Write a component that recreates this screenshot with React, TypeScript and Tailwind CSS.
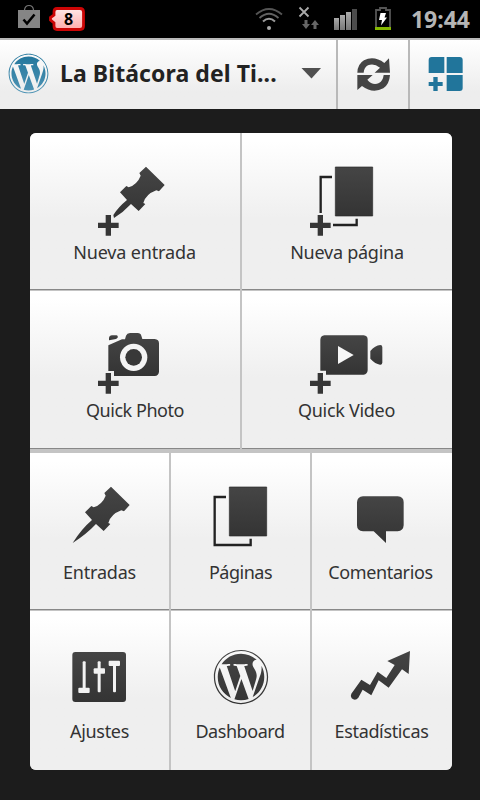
import React from "react";
import { FaWordpress } from "react-icons/fa";

type IconProps = { dx: number; dy: number };

// Icons are drawn on a triple-density grid and scaled down to device pixels.
function Glyph({ dx, dy, children }: IconProps & { children: React.ReactNode }) {
  return (
    <svg className="block h-20 w-full fill-[url(#ink)]" aria-hidden="true">
      <g transform={`translate(${dx} ${dy}) scale(0.33333)`}>{children}</g>
    </svg>
  );
}

function Plus({ x, y }: { x: number; y: number }) {
  return (
    <path
      transform={`translate(${x} ${y})`}
      d="M23 0H39V23H62V39H39V62H23V39H0V23H23Z"
      fill="#363636"
    />
  );
}

const PIN_HEAD =
  "M273 125L329 180L312 199L304 196Q272 208 265 234L271 237L251 258L228 237";

function PinAdd() {
  return (
    <Glyph dx={-10} dy={-32}>
      <path transform="translate(105 0)" d={PIN_HEAD + "Q205 262 177 279L175 270Q190 246 216 225L195 202L214 183L221 187Q247 178 257 152L253 144Z"} />
      <Plus x={234} y={270} />
    </Glyph>
  );
}

function Pin() {
  return (
    <Glyph dx={-10} dy={-32}>
      <path d={PIN_HEAD + "Q200 267 158 294Q184 252 216 225L195 202L214 183L221 187Q247 178 257 152L253 144Z"} />
    </Glyph>
  );
}

function PageSheet() {
  return <path d="M286 126H398V273H286Z" stroke="#2b2b2b" strokeWidth="2" />;
}

function PageAdd() {
  return (
    <Glyph dx={-2} dy={-32}>
      <PageSheet />
      <path d="M276 156H242V264M279 300H350V281" fill="none" stroke="#222" strokeWidth="7" />
      <Plus x={210} y={270} />
    </Glyph>
  );
}

function Pages() {
  return (
    <Glyph dx={-37} dy={-32}>
      <PageSheet />
      <path d="M276 156H242V300H350V281" fill="none" stroke="#222" strokeWidth="7" />
    </Glyph>
  );
}

function CameraAdd() {
  return (
    <Glyph dx={-10} dy={-30}>
      <path d="M267 166V159Q268 151 276 151H290Q295 152 293 158L288 162Z" />
      <path d="M265 181L306 163H315L318 152Q321 144 330 144H353Q362 144 364 152L367 162H404Q417 163 417 175V260Q416 272 404 273H282V258H265Z" />
      <circle cx="341" cy="217" r="41" fill="#f4f4f4" />
      <circle cx="341" cy="217" r="25" fill="#383838" />
      <Plus x={234} y={264} />
    </Glyph>
  );
}

function VideoAdd() {
  return (
    <Glyph dx={-2} dy={-30}>
      <path d="M253 151H371Q383 152 383 164V256Q382 268 371 269H258V257H241V164Q242 152 253 151Z" />
      <path d="M294 183L341 210L294 237Z" fill="#f6f6f6" />
      <path d="M391 198Q405 181 421 180Q427 180 427 187V233Q426 240 420 239Q406 237 391 221Z" />
      <Plus x={210} y={264} />
    </Glyph>
  );
}

function Comment() {
  return (
    <Glyph dx={-72} dy={-32}>
      <path d="M369 154H473Q491 155 491 172V241Q490 258 473 259H438V294L401 259H369Q351 258 351 241V172Q352 155 369 154Z" />
    </Glyph>
  );
}

function Sliders() {
  return (
    <Glyph dx={-10} dy={-35}>
      <rect x="157" y="156" width="161" height="150" rx="9" />
      <g fill="#f2f2f2">
        <rect x="188" y="184" width="9" height="90" rx="3" />
        <rect x="175" y="263" width="34" height="16" rx="3" />
        <rect x="233" y="184" width="9" height="93" rx="3" />
        <rect x="221" y="205" width="34" height="16" rx="3" />
        <rect x="279" y="186" width="9" height="91" rx="3" />
        <rect x="266" y="182" width="34" height="16" rx="3" />
      </g>
    </Glyph>
  );
}

function Dashboard() {
  return (
    <div className="flex h-20 w-full items-start justify-center pt-[14px]">
      <FaWordpress className="size-[56px] fill-[url(#ink)]" />
    </div>
  );
}

function Stats() {
  return (
    <Glyph dx={-72} dy={-35}>
      <path d="M510 153L506 222L486 208L446 263L416 241L394 286L368 269L355 293Q346 304 335 295Q330 289 334 281L364 239L390 255L413 215L439 234L464 195L442 183Z" />
    </Glyph>
  );
}

type TileProps = { label: string; className: string; labelClass?: string; children: React.ReactNode };

function Tile({ label, className, labelClass = "", children }: TileProps) {
  return (
    <button
      className={`flex flex-col bg-linear-to-b from-white from-5% to-[#efefef] to-55% pt-6 ${className}`}
    >
      {children}
      <span className={`block w-full text-center text-[18px] leading-[30px] whitespace-nowrap text-[#333] ${labelClass}`}>
        {label}
      </span>
    </button>
  );
}

function StatusBar() {
  return (
    <div className="flex h-[38px] items-center bg-black pr-[10px]">
      <svg className="block h-[38px] w-[400px]" aria-hidden="true">
        <defs>
          <linearGradient id="badge" x2="0" y2="1">
            <stop offset="0" stopColor="#ffe9e9" />
            <stop offset="1" stopColor="#ffabab" />
          </linearGradient>
          <linearGradient id="bars" x2="0" y2="1">
            <stop offset="0" stopColor="#aaa" />
            <stop offset="1" stopColor="#777" />
          </linearGradient>
        </defs>
        <path d="M24.5 10Q25 5.500 29 5.500T33.500 10" fill="none" stroke="#777" strokeWidth="1.200" />
        <rect x="18" y="10" width="22" height="18" fill="#858585" />
        <path d="M23.500 19.500L27 23.500L34.500 14.500" fill="none" stroke="#000" strokeWidth="2.500" />
        <path d="M57 8.500H80Q83.500 8.500 83.500 12V26Q83.500 29.500 80 29.500H57Q54 29.500 54 26V23L50.500 20V17.500L54 15V12Q54 8.500 57 8.500Z" fill="url(#badge)" stroke="#cc0505" strokeWidth="2.800" />
        <text x="68.700" y="25" textAnchor="middle" fontSize="16" fontWeight="700" fill="#000">8</text>
        <g fill="none" strokeWidth="1.800">
          <path d="M256 14.500Q269 3.500 282 14.500" stroke="#555" />
          <path d="M259.500 18Q269 9.500 278.500 18" stroke="#626262" />
          <path d="M263 21.500Q269 16 275 21.500" stroke="#999" strokeWidth="2" />
        </g>
        <circle cx="269" cy="28" r="2" fill="#aaa" />
        <path d="M299.500 7.500L308.500 16.500M308.500 7.500L299.500 16.500" stroke="#aaa" strokeWidth="1.800" />
        <path d="M304.500 20H307.500V24H310L306 29L302 24H304.500ZM313.500 29H316.500V25H319L315 20L311 25H313.500Z" fill="#666" />
        <g fill="url(#bars)">
          <rect x="334" y="18" width="5" height="12" />
          <rect x="340" y="15" width="5" height="15" />
          <rect x="346" y="12" width="5" height="18" />
        </g>
        <rect x="352" y="9" width="5" height="21" fill="#4c4c4c" />
        <path d="M376 27V10H380V8H386V10H390V27" fill="none" stroke="#555" strokeWidth="1.800" />
        <rect x="375" y="27" width="16" height="3" fill="#84b800" />
        <path d="M380.500 13H386L384.500 17.500H387L381 25.500L382 20H379Z" fill="#fff" />
      </svg>
      <span className="flex-1 text-right text-[23px] leading-[38px] font-bold text-[#b5b5b5]">19:44</span>
    </div>
  );
}

function Header() {
  return (
    <div className="flex h-[71px] border-t-2 border-[#b9b9b9] bg-linear-to-b from-white to-[#ededed] to-75%">
      <div className="flex w-[336px] items-center pl-2">
        <FaWordpress className="-mt-[3px] size-[41px] shrink-0 fill-[url(#wpblue)]" />
        <span className="-mt-0.5 ml-[11px] w-[241px] shrink-0 text-[23px] font-bold tracking-[0.08px] whitespace-nowrap text-[#222]">La Bitácora del Ti...</span>
        <svg className="-mt-1 block h-3 w-5 shrink-0" viewBox="0 0 20 12" aria-hidden="true">
          <path d="M0.500 1H20L10.500 11.500Z" fill="#505050" />
        </svg>
      </div>
      <div className="w-[72px] border-l-2 border-[#b9b9b9]">
        <svg className="block h-full w-full" aria-hidden="true">
          <g transform="translate(-98 -40) scale(0.33333)" fill="#444">
            <path d="M352 218Q353 192 372 181Q402 166 433 189L447 175L450 218H404L420 203Q401 188 384 196Q372 203 371 218Z" />
            <path d="M450 225Q448 253 430 265Q398 282 366 258L352 270V225H398L382 239Q398 258 417 249Q429 242 431 225Z" />
          </g>
        </svg>
      </div>
      <div className="w-[72px] border-l-2 border-[#b9b9b9]">
        <svg className="block h-full w-full" aria-hidden="true">
          <g transform="translate(-170 -40) scale(0.33333)" fill="#21759b">
            <path d="M575 171H613V219H566V180Q566 171 575 171Z" />
            <path d="M620 171H659Q668 171 668 180V219H620Z" />
            <path d="M620 225H668V264Q668 273 659 273H620Z" />
            <path d="M580 231H593V246H608V258H593V273H580V258H566V246H580Z" />
          </g>
        </svg>
      </div>
    </div>
  );
}

export default function App() {
  return (
    <div className="h-[800px] w-[480px] overflow-hidden bg-[#1c1c1c] font-['Noto_Sans',sans-serif]">
      <svg className="block size-0">
        <defs>
          <linearGradient id="ink" x2="0" y2="1">
            <stop offset="0" stopColor="#454545" />
            <stop offset="1" stopColor="#343434" />
          </linearGradient>
          <linearGradient id="wpblue" x2="0" y2="1">
            <stop offset="0" stopColor="#21759b" />
            <stop offset="1" stopColor="#4f94b5" />
          </linearGradient>
        </defs>
      </svg>
      <StatusBar />
      <Header />
      <main className="mt-6 ml-[30px] w-[422px] overflow-hidden rounded-[6px] bg-[#c4c4c4]">
        <div className="grid grid-cols-2 gap-x-[2px]">
          <Tile label="Nueva entrada" className="mb-px h-[157px] border-b border-[#888]" labelClass="pr-px tracking-[-0.15px]"><PinAdd /></Tile>
          <Tile label="Nueva página" className="mb-px h-[157px] border-b border-[#888]" labelClass="tracking-[-0.25px]"><PageAdd /></Tile>
          <Tile label="Quick Photo" className="mb-1 h-[158px] border-b border-[#888]" labelClass="tracking-[-0.45px]"><CameraAdd /></Tile>
          <Tile label="Quick Video" className="mb-1 h-[158px] border-b border-[#888]" labelClass="pr-px tracking-[-0.3px]"><VideoAdd /></Tile>
          </div>
        <div className="grid grid-cols-[139px_139px_140px] gap-x-[2px]">
          <Tile label="Entradas" className="mb-px h-[157px] border-b border-[#888]" labelClass="tracking-[-0.2px]"><Pin /></Tile>
          <Tile label="Páginas" className="mb-px h-[157px] border-b border-[#888]" labelClass="tracking-[-0.5px]"><Pages /></Tile>
          <Tile label="Comentarios" className="mb-px h-[157px] border-b border-[#888]" labelClass="pr-[3px] tracking-[-0.38px]"><Comment /></Tile>
          <Tile label="Ajustes" className="h-[159px]" labelClass="mt-px tracking-[-0.3px]"><Sliders /></Tile>
          <Tile label="Dashboard" className="h-[159px]" labelClass="mt-px pr-px tracking-[-0.45px]"><Dashboard /></Tile>
          <Tile label="Estadísticas" className="h-[159px]" labelClass="mt-px pr-px tracking-[-0.35px]"><Stats /></Tile>
        </div>
      </main>
    </div>
  );
}
